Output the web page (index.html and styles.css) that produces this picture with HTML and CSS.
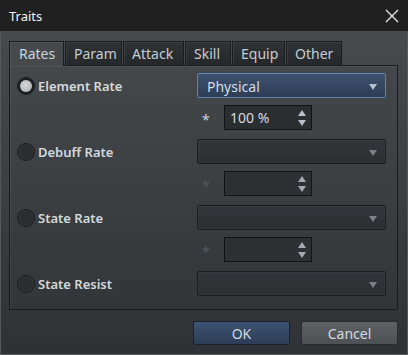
FILE: index.html
```html
<!DOCTYPE html>
<html lang="en">
<head>
    <meta charset="UTF-8">
    <title>Traits</title>
    <link rel="stylesheet" href="styles.css">
</head>
<body>
    <div class="window">
        <div class="titlebar">
            <span class="title">Traits</span>
            <svg class="close" width="14" height="14" viewBox="0 0 14 14">
                <path d="M1 1 L13 13 M13 1 L1 13" stroke="#e8e8e8" stroke-width="1.3" fill="none"/>
            </svg>
        </div>

        <div class="content">
            <div class="tabs">
                <div class="tab active">Rates</div>
                <div class="tab">Param</div>
                <div class="tab">Attack</div>
                <div class="tab">Skill</div>
                <div class="tab">Equip</div>
                <div class="tab">Other</div>
            </div>

            <div class="panel">
                <div class="trait">
                    <label class="radio-label"><span class="radio checked"></span>Element Rate</label>
                    <div class="combo selected">Physical<span class="arrow"></span></div>
                    <div class="rate-row">
                        <span class="star">*</span>
                        <div class="spin">100 %<span class="spin-arrows"><i class="up"></i><i class="down"></i></span></div>
                    </div>
                </div>

                <div class="trait">
                    <label class="radio-label"><span class="radio"></span>Debuff Rate</label>
                    <div class="combo disabled"><span class="arrow"></span></div>
                    <div class="rate-row">
                        <span class="star dim">*</span>
                        <div class="spin disabled"><span class="spin-arrows"><i class="up"></i><i class="down"></i></span></div>
                    </div>
                </div>

                <div class="trait">
                    <label class="radio-label"><span class="radio"></span>State Rate</label>
                    <div class="combo disabled"><span class="arrow"></span></div>
                    <div class="rate-row">
                        <span class="star dim">*</span>
                        <div class="spin disabled"><span class="spin-arrows"><i class="up"></i><i class="down"></i></span></div>
                    </div>
                </div>

                <div class="trait last">
                    <label class="radio-label"><span class="radio"></span>State Resist</label>
                    <div class="combo disabled"><span class="arrow"></span></div>
                </div>
            </div>

            <div class="buttons">
                <button class="btn ok">OK</button>
                <button class="btn cancel">Cancel</button>
            </div>
        </div>
    </div>
</body>
</html>
```

FILE: styles.css
```css
* {
    margin: 0;
    padding: 0;
    box-sizing: border-box;
}

body {
    font-family: 'Noto Sans', 'Open Sans', sans-serif;
    background: #2e3235;
    width: 408px;
    height: 355px;
    overflow: hidden;
}

.window {
    width: 408px;
    height: 355px;
    display: flex;
    flex-direction: column;
}

.titlebar {
    height: 31px;
    background: #202020;
    display: flex;
    align-items: center;
    justify-content: space-between;
    padding: 0 9px 0 9px;
    color: #f2f2f2;
    font-size: 13px;
}

.content {
    flex: 1;
    background: linear-gradient(180deg, #474a4c 0%, #3c4043 45%, #2e3235 100%);
    border-left: 1px solid #55585b;
    border-right: 1px solid #55585b;
    border-bottom: 1px solid #55585b;
    padding: 10px 9px 0 8px;
}

.tabs {
    display: flex;
    height: 24px;
    position: relative;
    z-index: 1;
}

.tab {
    height: 24px;
    padding: 0 7px 0 8px;
    margin-right: 1px;
    border: 1px solid #1a1c1e;
    border-bottom: none;
    background: linear-gradient(180deg, #303336 0%, #25282b 100%);
    box-shadow: inset 1px 1px 0 rgba(255, 255, 255, 0.07);
    color: #c3ccd3;
    font-size: 14px;
    line-height: 23px;
}

.tab:nth-child(2) { width: 57px; }
.tab:nth-child(3) { width: 61px; }
.tab:nth-child(4) { width: 46px; }
.tab:nth-child(5) { width: 53px; }
.tab:nth-child(6) { width: 56px; }

.tab.active {
    width: 55px;
    padding-left: 9px;
    background: #45494b;
    height: 25px;
    margin-bottom: -1px;
    color: #cbd4db;
}

.panel {
    height: 245px;
    border: 1px solid #191b1c;
    box-shadow: inset 1px 1px 0 rgba(255, 255, 255, 0.06);
    padding: 7px 11px 0 7px;
    display: flex;
    flex-direction: column;
    gap: 9px;
}

.trait {
    display: grid;
    grid-template-columns: 180px 189px;
    row-gap: 7px;
}

.radio-label {
    display: flex;
    align-items: center;
    gap: 3px;
    color: #d3d9dd;
    font-size: 13px;
    font-weight: 600;
}

.radio {
    width: 18px;
    height: 18px;
    border-radius: 50%;
    background: #2b2e31;
    border: 1px solid #1b1d1f;
    box-shadow: inset 0 0 0 1px #34383b;
    display: flex;
    align-items: center;
    justify-content: center;
}

.radio.checked {
    background: #1f2123;
    box-shadow: none;
}

.radio.checked::after {
    content: "";
    width: 12px;
    height: 12px;
    border-radius: 50%;
    background: radial-gradient(circle at 45% 40%, #d6d6d6, #ababab);
}

.combo {
    height: 25px;
    border-radius: 2px;
    position: relative;
    font-size: 14px;
    line-height: 25px;
    padding-left: 9px;
}

.combo.selected {
    border: 1px solid #5b84b4;
    background: linear-gradient(180deg, #3e526e 0%, #2d3d55 100%);
    color: #d6dde4;
}

.combo.disabled {
    border: 1px solid #1b1d1f;
    background: linear-gradient(180deg, #323539 0%, #2c2f32 100%);
    box-shadow: inset 0 0 0 1px rgba(255, 255, 255, 0.03);
}

.arrow {
    position: absolute;
    right: 8px;
    top: 10px;
    width: 0;
    height: 0;
    border-left: 4px solid transparent;
    border-right: 4px solid transparent;
    border-top: 6px solid #b9c2cb;
}

.combo.disabled .arrow {
    border-top-color: #7b8187;
}

.rate-row {
    grid-column: 2;
    display: flex;
    align-items: center;
    height: 25px;
}

.star {
    width: 27px;
    padding-left: 5px;
    color: #c9d0d6;
    font-size: 14px;
    line-height: 1;
    padding-top: 4px;
}

.star.dim {
    color: #54595d;
}

.spin {
    width: 88px;
    height: 25px;
    border: 1px solid #121314;
    background: #2b2e31;
    color: #d4dbe1;
    font-size: 14px;
    line-height: 24px;
    padding-left: 5px;
    position: relative;
}

.spin.disabled {
    background: #2d3033;
}

.spin-arrows {
    position: absolute;
    right: 5px;
    top: 4px;
    display: flex;
    flex-direction: column;
    gap: 4px;
}

.spin-arrows i {
    display: block;
    width: 0;
    height: 0;
    border-left: 4px solid transparent;
    border-right: 4px solid transparent;
}

.spin-arrows .up {
    border-bottom: 6px solid #b7c0c8;
}

.spin-arrows .down {
    border-top: 6px solid #b7c0c8;
}

.spin.disabled .spin-arrows .up {
    border-bottom-color: #a2a9b0;
}

.spin.disabled .spin-arrows .down {
    border-top-color: #a2a9b0;
}

.buttons {
    display: flex;
    justify-content: flex-end;
    gap: 11px;
    margin-top: 11px;
}

.btn {
    width: 97px;
    height: 24px;
    border-radius: 2px;
    font-family: 'Noto Sans', 'Open Sans', sans-serif;
    font-size: 14px;
    color: #d3dae0;
}

.btn.ok {
    border: 1px solid #1a2230;
    background: linear-gradient(180deg, #3d5373 0%, #2c3c55 100%);
}

.btn.cancel {
    border: 1px solid #292b2d;
    background: linear-gradient(180deg, #5e6164 0%, #4e5154 100%);
}
```
